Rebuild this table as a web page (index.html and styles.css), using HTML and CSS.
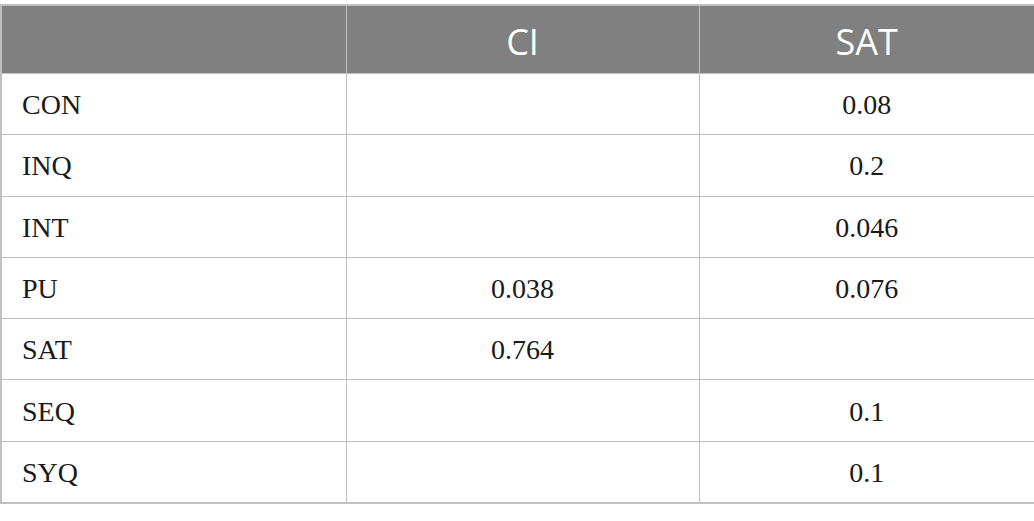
FILE: index.html
```html
<!DOCTYPE html>
<html lang="en">
<head>
<meta charset="utf-8">
<title>Table</title>
<link rel="stylesheet" href="styles.css">
</head>
<body>
<div class="wrap">
<table class="data">
<colgroup><col class="c1"><col class="c2"><col class="c3"></colgroup>
<thead>
<tr><th></th><th>CI</th><th>SAT</th></tr>
</thead>
<tbody>
<tr><td class="lbl">CON</td><td></td><td>0.08</td></tr>
<tr><td class="lbl">INQ</td><td></td><td>0.2</td></tr>
<tr><td class="lbl">INT</td><td></td><td>0.046</td></tr>
<tr><td class="lbl">PU</td><td>0.038</td><td>0.076</td></tr>
<tr><td class="lbl">SAT</td><td>0.764</td><td></td></tr>
<tr><td class="lbl">SEQ</td><td></td><td>0.1</td></tr>
<tr><td class="lbl">SYQ</td><td></td><td>0.1</td></tr>
</tbody>
</table>
</div>
</body>
</html>
```
FILE: styles.css
```css
html, body {
  margin: 0;
  padding: 0;
  background: #ffffff;
}
.wrap {
  padding-top: 4px;
}
.data {
  width: 1034px;
  border-collapse: collapse;
  table-layout: fixed;
  border: 2px solid #c0c0c0;
}
.c1 { width: 345px; }
.c2 { width: 353px; }
.c3 { width: 336px; }
.data th {
  background: #808080;
  color: #ffffff;
  font-family: "Open Sans", "Noto Sans", sans-serif;
  font-weight: 400;
  font-size: 36px;
  line-height: 40px;
  height: 62px;
  padding: 5px 0 0 0;
  border: 1px solid #c0c0c0;
  text-align: center;
  vertical-align: middle;
}
.data td {
  font-family: "Liberation Serif", "Times New Roman", serif;
  font-size: 28px;
  line-height: 32px;
  color: #1a1a1a;
  height: 58.3px;
  padding: 2px 0 0 0;
  border: 1px solid #c0c0c0;
  text-align: center;
  vertical-align: middle;
}
.data td.lbl {
  text-align: left;
  padding-left: 20px;
}
```
